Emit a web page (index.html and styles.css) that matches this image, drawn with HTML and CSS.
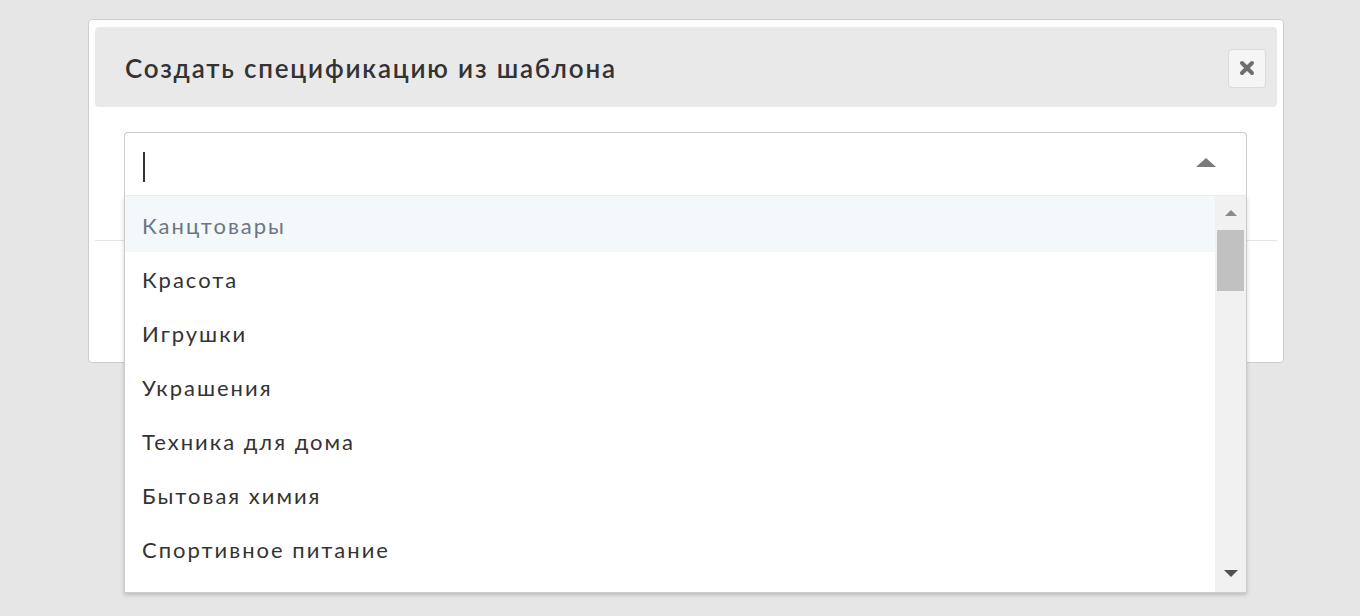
FILE: index.html
```html
<!DOCTYPE html>
<html lang="ru">
<head>
<meta charset="utf-8">
<link rel="stylesheet" href="styles.css">
</head>
<body>
<div class="modal">
  <div class="modal-header">
    <h4 class="modal-title">Создать спецификацию из шаблона</h4>
    <button class="close-btn" type="button" aria-label="Закрыть">
      <svg width="16" height="16" viewBox="0 0 16 16"><path d="M3 3 L13 13 M13 3 L3 13" stroke="#6f6f6f" stroke-width="4" stroke-linecap="round"/></svg>
    </button>
  </div>
  <div class="modal-body">
    <div class="select">
      <div class="select-input">
        <span class="cursor"></span>
        <span class="caret-up"></span>
      </div>
      <div class="dropdown">
        <ul class="options">
          <li class="option active">Канцтовары</li>
          <li class="option">Красота</li>
          <li class="option">Игрушки</li>
          <li class="option">Украшения</li>
          <li class="option">Техника для дома</li>
          <li class="option">Бытовая химия</li>
          <li class="option">Спортивное питание</li>
        </ul>
        <div class="scrollbar">
          <span class="sb-up"></span>
          <span class="sb-thumb"></span>
          <span class="sb-track"></span>
          <span class="sb-down"></span>
        </div>
      </div>
    </div>
  </div>
  <div class="modal-footer"></div>
</div>
</body>
</html>
```
FILE: styles.css
```css
html, body {
  margin: 0;
  padding: 0;
  background: #e6e6e6;
  font-family: Lato, "Open Sans", "Noto Sans", sans-serif;
  height: 616px;
  overflow: hidden;
}
.modal {
  margin: 19px 0 0 88px;
  width: 1182px;
  background: #fff;
  border: 1px solid #cdcdcd;
  border-radius: 4px;
  padding: 7px 6px 8px;
}
.modal-header {
  height: 80px;
  background: #e9e9e9;
  border-radius: 4px;
  display: flex;
  align-items: center;
  justify-content: space-between;
  padding: 0 11px 0 30px;
}
.modal-title {
  margin: 2px 0 0 0;
  font-size: 26px;
  font-weight: 600;
  color: #333;
  letter-spacing: 1.8px;
}
.close-btn {
  width: 38px;
  height: 39px;
  margin-top: 2px;
  padding: 0;
  background: #f5f5f5;
  border: 1px solid #dadada;
  border-radius: 4px;
  display: flex;
  align-items: center;
  justify-content: center;
}
.modal-body {
  padding: 25px 30px 44px 29px;
}
.select {
  position: relative;
}
.select-input {
  height: 64px;
  box-sizing: border-box;
  border: 1px solid #cccccc;
  border-bottom-color: #f0f0f0;
  border-radius: 4px 4px 0 0;
  display: flex;
  align-items: center;
  justify-content: space-between;
  padding: 0 30px 0 18px;
}
.cursor {
  width: 2px;
  height: 30px;
  margin-top: 6px;
  background: #333;
}
.caret-up {
  width: 0;
  height: 0;
  border-left: 10px solid transparent;
  border-right: 10px solid transparent;
  border-bottom: 9px solid #7a7a7a;
  margin-bottom: 4px;
}
.dropdown {
  position: absolute;
  left: 0;
  right: 0;
  top: 64px;
  height: 396px;
  background: #fff;
  border: 1px solid #cccccc;
  border-top: none;
  box-shadow: 0 2px 4px rgba(0,0,0,0.18);
  display: flex;
  overflow: hidden;
  z-index: 2;
}
.options {
  flex: 1;
  list-style: none;
  margin: 0;
  padding: 0;
}
.option {
  height: 54px;
  display: flex;
  align-items: center;
  padding-left: 17px;
  font-size: 22px;
  letter-spacing: 2px;
  color: #333;
}
.option.active {
  background: #f3f8fb;
  color: #6b7684;
  height: 56px;
  padding-top: 2px;
  box-sizing: border-box;
}
.scrollbar {
  width: 31px;
  background: #f1f1f1;
  display: flex;
  flex-direction: column;
  align-items: center;
}
.sb-up {
  margin-top: 14px;
  width: 0;
  height: 0;
  border-left: 6px solid transparent;
  border-right: 6px solid transparent;
  border-bottom: 6px solid #8a8a8a;
}
.sb-thumb {
  margin-top: 14px;
  width: 27px;
  height: 61px;
  background: #c1c1c1;
}
.sb-track {
  flex: 1;
}
.sb-down {
  margin-bottom: 15px;
  width: 0;
  height: 0;
  border-left: 7px solid transparent;
  border-right: 7px solid transparent;
  border-top: 7px solid #505050;
}
.modal-footer {
  height: 113px;
  border-top: 1px solid #e5e5e5;
}
```
